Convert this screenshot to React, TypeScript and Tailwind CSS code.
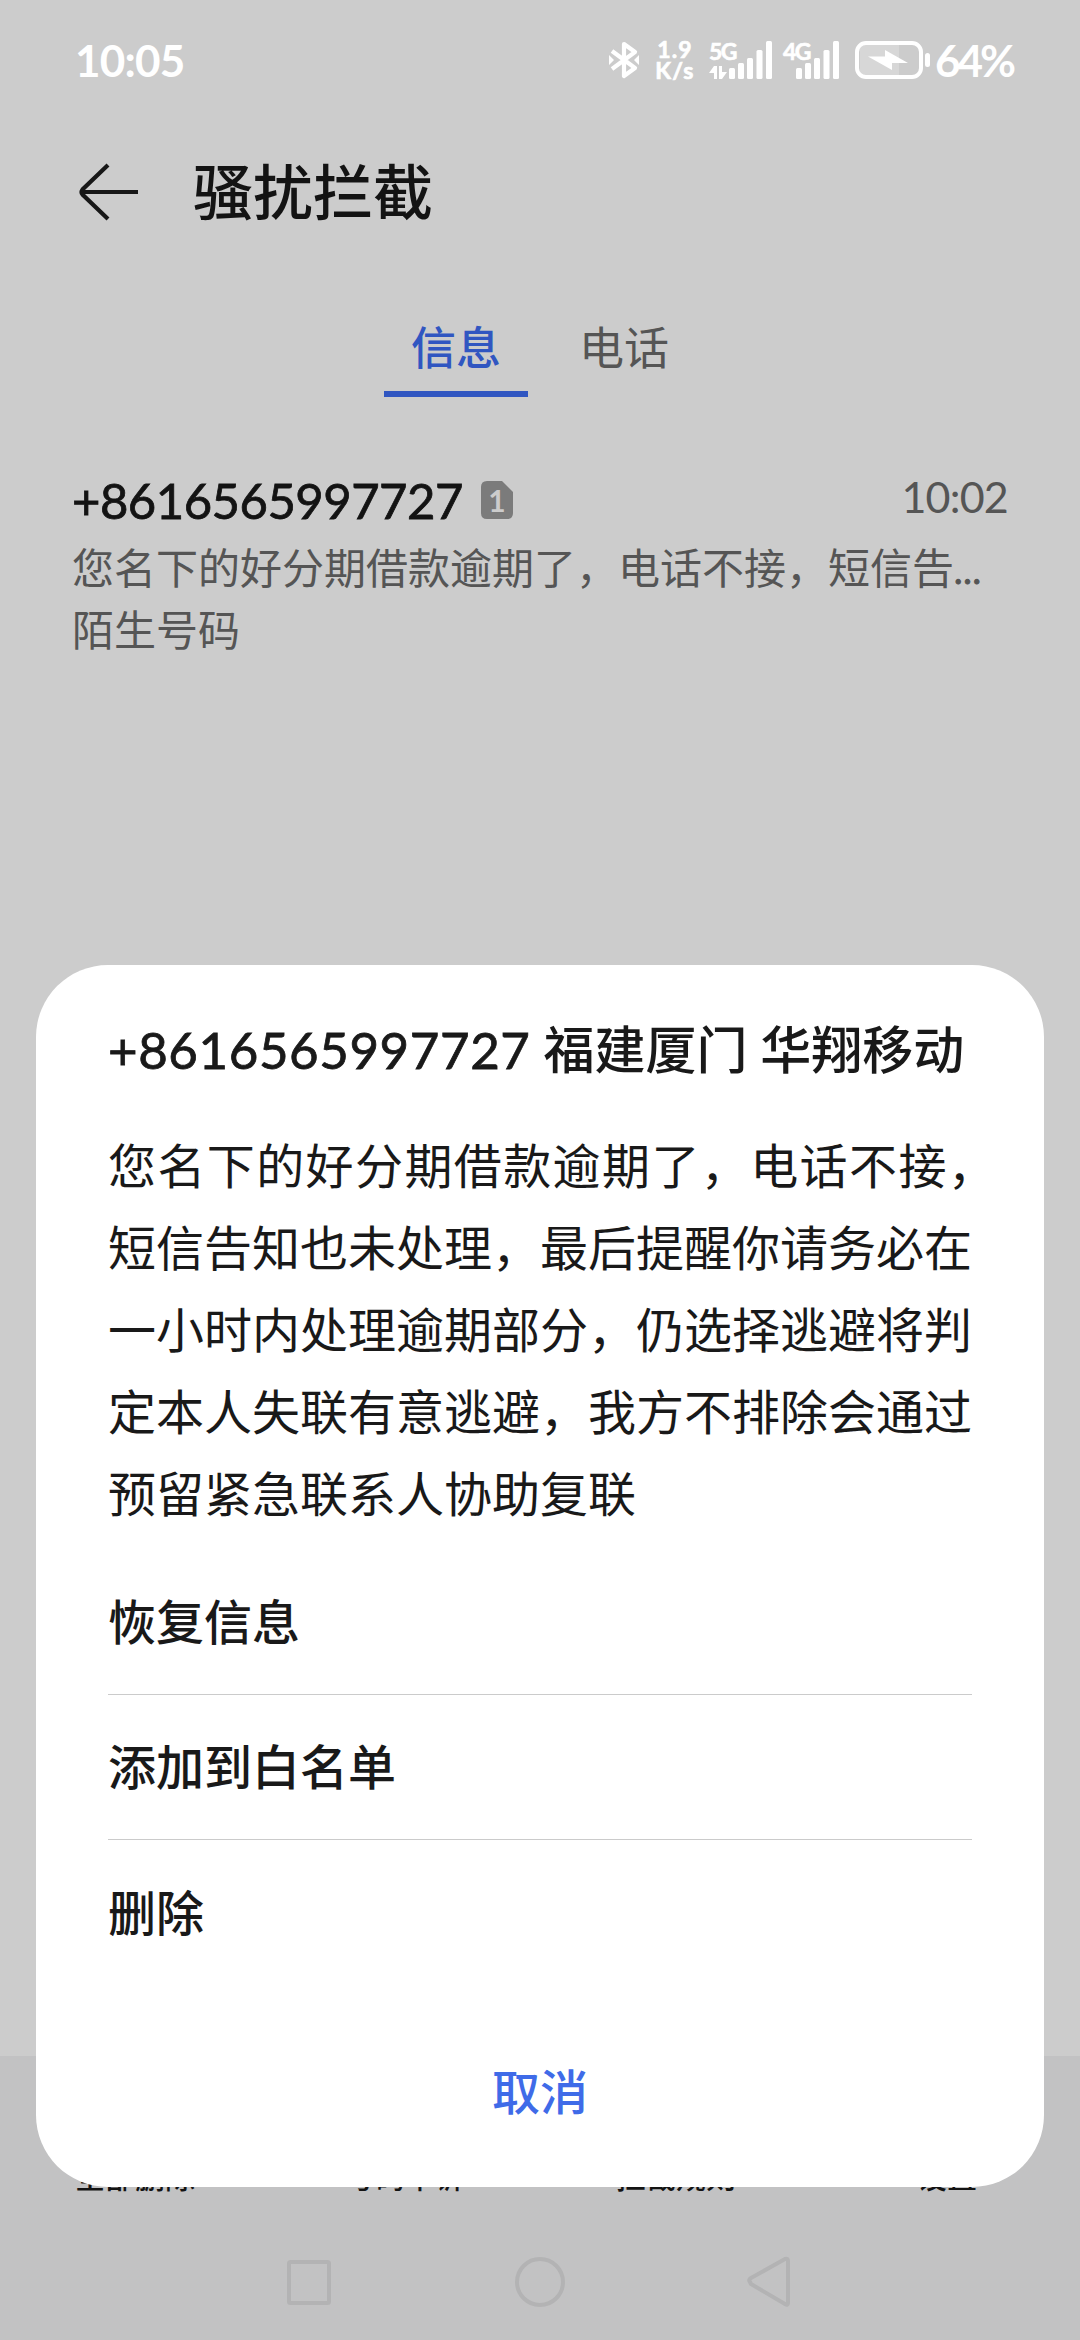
import type { ReactNode } from "react";

const MESSAGE_LINES = [
  "短信告知也未处理，最后提醒你请务必在",
  "一小时内处理逾期部分，仍选择逃避将判",
  "定本人失联有意逃避，我方不排除会通过",
  "预留紧急联系人协助复联",
];

const MENU_ITEMS = ["恢复信息", "添加到白名单", "删除"];

const TOOLBAR_ITEMS = [
  { label: "全部删除", className: "w-[120px]" },
  { label: "号码申诉", className: "ml-[150px] w-[120px]" },
  { label: "拦截规则", className: "ml-[151px] w-[120px]" },
  { label: "设置", className: "ml-[181px] w-[60px]" },
];

const BluetoothIcon = () => (
  <svg width="30" height="40" viewBox="0 0 30 40" fill="none" stroke="white" strokeWidth="4.2">
    <path d="M3 11 L26 28 L15 36 V4 L26 12 L3 29" strokeLinejoin="round" />
    <path d="M0 15 L5 20 L0 25 Z M30 15 L25 20 L30 25 Z" fill="white" stroke="none" />
  </svg>
);

const SignalBars = () => (
  <svg width="44" height="39" viewBox="0 0 44 39" fill="white">
    <rect x="0" y="28" width="6" height="11" rx="1.5" />
    <rect x="9" y="23" width="6" height="16" rx="1.5" />
    <rect x="18" y="18" width="6" height="21" rx="1.5" />
    <rect x="27.5" y="10" width="6" height="29" rx="1.5" />
    <rect x="37" y="1" width="6" height="38" rx="1.5" />
  </svg>
);

const DataArrows = () => (
  <svg width="18" height="13" viewBox="0 0 18 13" fill="white" className="absolute left-0 top-[26px]">
    <path d="M0 7 L5 0 H8 V13 H5 V7 Z M10 0 H13 V6 H18 L13 13 H10 Z" />
  </svg>
);

const Signal = ({ label, data }: { label: string; data?: boolean }) => (
  <div className={data ? "relative h-10 w-16 pl-5" : "relative h-10 w-[57px] pl-[13px]"}>
    <span className="absolute -top-px left-0 text-[23px] leading-[24px] font-bold tracking-[-1.5px] [-webkit-text-stroke:0.6px]">
      {label}
    </span>
    {data && <DataArrows />}
    <SignalBars />
  </div>
);

const BatteryIcon = () => (
  <svg width="76" height="38" viewBox="0 0 76 38" fill="none">
    <rect x="5" y="4" width="39" height="30" fill="#d7d7d7" />
    <rect x="2" y="2" width="64" height="34" rx="9" stroke="white" strokeWidth="4" />
    <rect x="70" y="12" width="5" height="14" rx="2.5" fill="white" />
    <path d="M30 9 L53 22 H37 V29 L13 15.5 H30 Z" fill="white" />
  </svg>
);

const StatusBar = () => (
  <div className="flex h-[120px] items-start pl-[75px] pt-[40px] text-white">
    <span className="w-[110px] text-[44px] leading-[40px] font-bold tracking-[-0.8px]">10:05</span>
    <div className="ml-[424px] flex h-10">
      <BluetoothIcon />
      <div className="-mt-px ml-4 w-10 text-center text-[23px] leading-[21px] font-bold tracking-[1.2px] whitespace-nowrap [-webkit-text-stroke:0.7px]">
        <div>1.9</div>
        <div>K/s</div>
      </div>
      <div className="ml-[14px] flex gap-[10px]">
        <Signal label="5G" data />
        <Signal label="4G" />
      </div>
      <div className="ml-[15px] mt-px">
        <BatteryIcon />
      </div>
      <span className="ml-1 text-[44px] leading-[40px] font-bold tracking-[-3px]">64%</span>
    </div>
  </div>
);

const Header = () => (
  <header className="flex h-[144px] items-center pl-[79px]">
    <svg width="60" height="58" viewBox="0 0 60 58" fill="none" stroke="#171717" strokeWidth="4.2">
      <path d="M29 2 L3.5 26.5 Q1.5 29 3.5 31.5 L29 56 M3 29 H59" />
    </svg>
    <h1 className="ml-[54px] text-[60px] leading-[72px] font-medium">骚扰拦截</h1>
  </header>
);

const Tab = ({ active, children }: { active?: boolean; children: ReactNode }) => (
  <button
    className={
      active
        ? "h-[98px] w-36 border-b-6 border-[#3056c1] pt-2 font-medium text-[#3056c1]"
        : "h-[98px] w-36 border-b-6 border-transparent pt-2 text-[#555555]"
    }
  >
    {children}
  </button>
);

const SimBadge = () => (
  <div className="relative h-[38px] w-8 text-center text-[30px] leading-[38px] font-bold text-[#cccccc]">
    <svg width="32" height="38" viewBox="0 0 32 38" className="absolute left-0 top-0">
      <path d="M6 0 H21 L32 11 V32 Q32 38 26 38 H6 Q0 38 0 32 V6 Q0 0 6 0 Z" fill="#7b7b7b" />
    </svg>
    <span className="relative">1</span>
  </div>
);

const BlockedMessage = () => (
  <div className="px-[72px] text-[42px] text-[#555555]">
    <div className="flex h-[67px] items-start justify-between">
      <div className="flex items-center">
        <span className="text-[49px] leading-[60px] tracking-[-0.5px] text-[#131313] [-webkit-text-stroke:0.8px]">
          +8616565997727
        </span>
        <span className="ml-[18px]">
          <SimBadge />
        </span>
      </div>
      <span className="text-[43px] leading-[54px] tracking-[-0.8px]">10:02</span>
    </div>
    <p className="h-[62px] leading-[63px] whitespace-nowrap">
      您名下的好分期借款逾期了，电话不接，短信告
      <span className="text-[36px] leading-none [-webkit-text-stroke:1px]">…</span>
    </p>
    <p className="leading-[63px]">陌生号码</p>
  </div>
);

const NavBar = () => (
  <svg width="1080" height="144" viewBox="0 0 1080 144" fill="none" stroke="#b3b3b4" strokeWidth="4">
    <rect x="289" y="66" width="40" height="41" rx="1.5" />
    <circle cx="540" cy="86" r="23" />
    <path d="M750 86 Q748 84 751 82 L785 63 Q788 62 788 65 V107 Q788 110 785 108 L751 88 Z" strokeLinejoin="round" />
  </svg>
);

const MessageDialog = () => (
  <div className="absolute left-[36px] top-[965px] flex h-[1222px] w-[1008px] flex-col rounded-[72px] bg-white px-[72px] pt-[43px] text-[#191919]">
    <h2 className="text-[51px] leading-[84px] font-medium whitespace-nowrap">
      <span className="font-normal tracking-[0.6px] [-webkit-text-stroke:0.8px]">+8616565997727</span> 福建厦门 华翔移动
    </h2>
    <div className="mt-[33px] text-[48px] leading-[82px] whitespace-nowrap">
      <p className="tracking-[1.4px]">您名下的好分期借款逾期了，电话不接，</p>
      {MESSAGE_LINES.map((line) => (
        <p key={line}>{line}</p>
      ))}
    </div>
    <ul className="mt-[15px] divide-y divide-[#cbcbcb] text-[48px] font-medium">
      {MENU_ITEMS.map((item) => (
        <li key={item} className="flex h-[145px] items-center">
          {item}
        </li>
      ))}
    </ul>
    <button className="mt-[47px] h-[120px] text-[48px] font-medium text-[#3f6be8]">取消</button>
  </div>
);

export default function App() {
  return (
    <div className="relative flex h-[2340px] w-[1080px] flex-col overflow-hidden bg-[#cccccc] font-[Lato,'Noto_Sans_CJK_SC',sans-serif] text-[#131313]">
      <StatusBar />
      <Header />
      <nav className="mt-[35px] flex justify-center gap-6 text-[45px]">
        <Tab active>信息</Tab>
        <Tab>电话</Tab>
      </nav>
      <div className="mt-[73px]">
        <BlockedMessage />
      </div>
      <footer className="mt-auto h-[284px] bg-[#c2c2c3]">
        <div className="flex h-[138px] items-end pl-[75px] text-[30px] leading-[36px] font-medium whitespace-nowrap">
          {TOOLBAR_ITEMS.map((item) => (
            <span key={item.label} className={item.className}>
              {item.label}
            </span>
          ))}
        </div>
        <div className="pt-[2px]">
          <NavBar />
        </div>
      </footer>
      <MessageDialog />
    </div>
  );
}
